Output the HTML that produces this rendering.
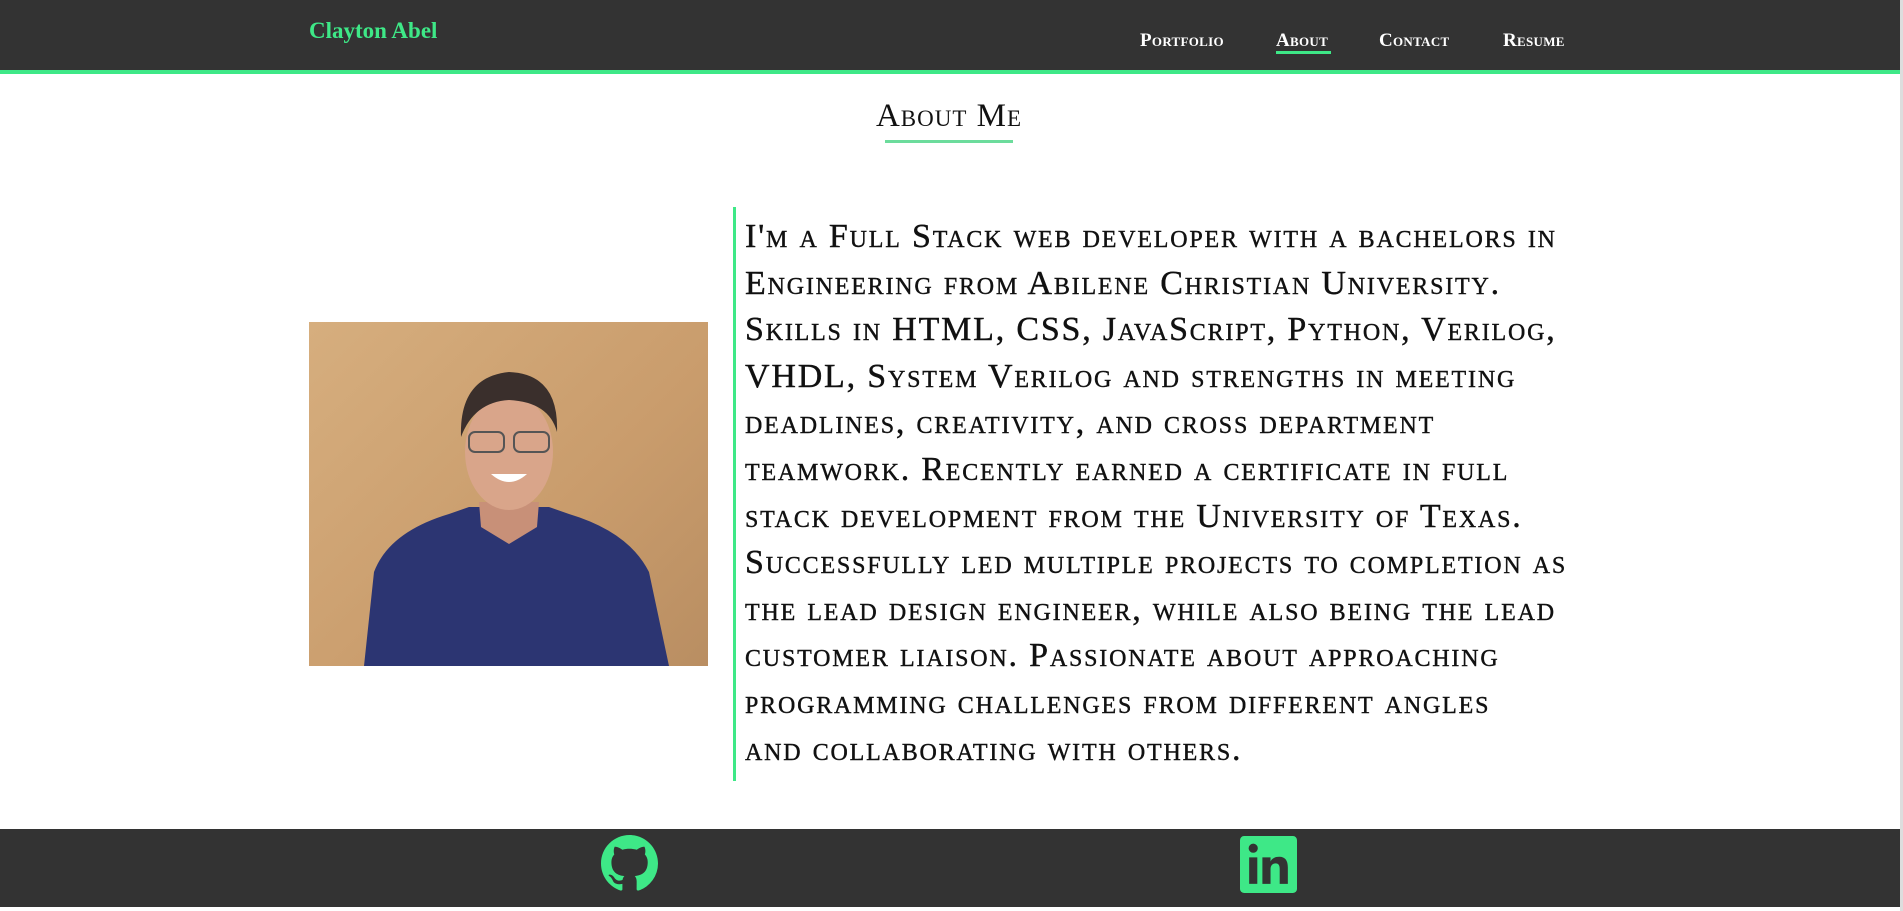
<!DOCTYPE html>
<html><head><meta charset="utf-8"><style>
*{margin:0;padding:0;box-sizing:border-box}
body{width:1903px;height:911px;overflow:hidden;background:#fff;position:relative;font-family:"Liberation Serif",serif}
.nav{position:absolute;left:0;top:0;width:1903px;height:74px;background:#333;border-bottom:4px solid #3ee887}
.brand{position:absolute;left:309px;top:18px;color:#3ee887;font-weight:bold;font-size:23px}
.nav a{position:absolute;top:30px;color:#fff;font-variant:small-caps;font-weight:bold;font-size:19px;text-decoration:none;letter-spacing:.3px}
.ul{position:absolute;left:1276px;top:51px;width:55px;height:3px;background:#3ee887}
h1{position:absolute;left:0;width:1898px;text-align:center;top:98px;font-weight:normal;font-variant:small-caps;font-size:33px;letter-spacing:1px;color:#111}
.hl{position:absolute;left:885px;top:140px;width:128px;height:3px;background:#6cdc9c}
.photo{position:absolute;left:309px;top:322px;width:399px;height:344px;background:linear-gradient(135deg,#d6ae7e,#c99c6c 60%,#b98e62);overflow:hidden}
.vl{position:absolute;left:733px;top:207px;width:3px;height:574px;background:#3ee887}
.txt{position:absolute;left:745px;top:214px;font-size:34px;line-height:46.6px;font-variant:small-caps;color:#111;white-space:nowrap;letter-spacing:1.8px;-webkit-text-stroke:.4px #111}
.foot{position:absolute;left:0;top:829px;width:1903px;height:78px;background:#333}
.sb{position:absolute;right:0;top:0;width:3px;height:911px;background:#ddd}
</style></head><body>
<div class="nav">
<div class="brand">Clayton Abel</div>
<a style="left:1140px">Portfolio</a>
<a style="left:1276px">About</a>
<a style="left:1379px">Contact</a>
<a style="left:1503px">Resume</a>
<div class="ul"></div>
</div>
<h1>About Me</h1>
<div class="hl"></div>
<div class="photo">
<svg width="399" height="344" viewBox="0 0 399 344">
<path d="M55 344 L65 250 Q80 210 140 192 L160 185 L240 185 L260 192 Q320 210 340 250 L360 344 Z" fill="#2c3572"/>
<path d="M170 180 L172 205 L200 222 L228 205 L230 180 Z" fill="#c89078"/>
<ellipse cx="200" cy="130" rx="44" ry="58" fill="#d9a58a"/>
<path d="M152 115 Q150 55 200 50 Q250 52 248 110 Q240 80 200 78 Q165 80 152 115 Z" fill="#3a2f2c"/>
<rect x="160" y="110" width="35" height="20" rx="6" fill="none" stroke="#555" stroke-width="2"/>
<rect x="205" y="110" width="35" height="20" rx="6" fill="none" stroke="#555" stroke-width="2"/>
<path d="M182 152 Q200 168 218 152 Z" fill="#fff"/>
</svg>
</div>
<div class="vl"></div>
<div class="txt">I'm a Full Stack web developer with a bachelors in<br>Engineering from Abilene Christian University.<br>Skills in HTML, CSS, JavaScript, Python, Verilog,<br>VHDL, System Verilog and strengths in meeting<br>deadlines, creativity, and cross department<br>teamwork. Recently earned a certificate in full<br>stack development from the University of Texas.<br>Successfully led multiple projects to completion as<br>the lead design engineer, while also being the lead<br>customer liaison. Passionate about approaching<br>programming challenges from different angles<br>and collaborating with others.</div>
<div class="foot">
<svg style="position:absolute;left:601px;top:6px" width="57" height="57" viewBox="0 0 16 16"><path fill="#3ee887" d="M8 0C3.58 0 0 3.58 0 8c0 3.54 2.29 6.53 5.47 7.59.4.07.55-.17.55-.38 0-.19-.01-.82-.01-1.49-2.01.37-2.53-.49-2.690-.94-.09-.23-.48-.94-.82-1.13-.28-.15-.68-.52-.01-.53.63-.01 1.08.58 1.23.82.72 1.21 1.87.87 2.33.66.07-.52.28-.87.51-1.07-1.780-.2-3.64-.89-3.64-3.95 0-.87.31-1.59.82-2.15-.08-.2-.36-1.02.08-2.12 0 0 .67-.21 2.2.82.64-.18 1.32-.27 2-.27.68 0 1.36.09 2 .27 1.53-1.04 2.2-.82 2.2-.82.44 1.1.16 1.92.08 2.12.51.56.82 1.27.82 2.15 0 3.07-1.87 3.75-3.65 3.95.29.25.54.73.54 1.48 0 1.070-.01 1.93-.01 2.2 0 .21.15.46.55.38A8.013 8.013 0 0016 8c0-4.42-3.58-8-8-8z"/></svg>
<svg style="position:absolute;left:1240px;top:7px" width="57" height="57" viewBox="0 0 56 56"><rect width="56" height="56" rx="4" fill="#3ee887"/><rect x="9" y="21" width="8" height="26" fill="#333"/><circle cx="13" cy="12" r="4.5" fill="#333"/><path d="M22 21h8v4c1.5-3 4.5-4.6 8.5-4.6 6 0 8.5 3.8 8.5 10.6V47h-8V32.5c0-3.5-1-5.6-4-5.6s-5 2.2-5 5.6V47h-8z" fill="#333"/></svg>
</div>
<div class="sb"></div>
</body></html>
